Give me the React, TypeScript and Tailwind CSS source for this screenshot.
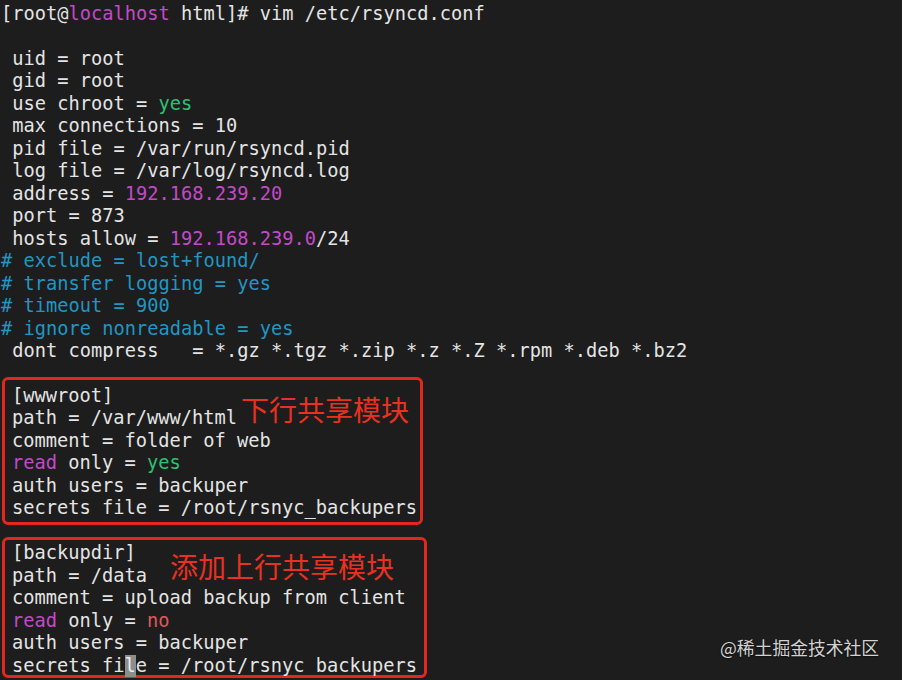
import React from "react";

type Seg = { t: string; c?: string; cursor?: boolean; note?: "a" | "b" };

const G = "text-[#2ec173]";
const M = "text-[#c449c9]";
const C = "text-[#2196c3]";
const R = "text-[#e0575b]";

const head: Seg[][] = [
  [{ t: "[root@" }, { t: "localhost", c: M }, { t: " html]# vim /etc/rsyncd.conf" }],
  [{ t: " " }],
  [{ t: " uid = root" }],
  [{ t: " gid = root" }],
  [{ t: " use chroot = " }, { t: "yes", c: G }],
  [{ t: " max connections = 10" }],
  [{ t: " pid file = /var/run/rsyncd.pid" }],
  [{ t: " log file = /var/log/rsyncd.log" }],
  [{ t: " address = " }, { t: "192.168.239.20", c: M }],
  [{ t: " port = 873" }],
  [{ t: " hosts allow = " }, { t: "192.168.239.0", c: M }, { t: "/24" }],
  [{ t: "# exclude = lost+found/", c: C }],
  [{ t: "# transfer logging = yes", c: C }],
  [{ t: "# timeout = 900", c: C }],
  [{ t: "# ignore nonreadable = yes", c: C }],
  [{ t: " dont compress   = *.gz *.tgz *.zip *.z *.Z *.rpm *.deb *.bz2" }],
  [{ t: " " }],
];

const box1: Seg[][] = [
  [{ t: "[wwwroot]" }],
  [{ t: "path = /var/www/html" }, { t: "下行共享模块", note: "a" }],
  [{ t: "comment = folder of web" }],
  [{ t: "read", c: M }, { t: " only = " }, { t: "yes", c: G }],
  [{ t: "auth users = backuper" }],
  [{ t: "secrets file = /root/rsnyc_backupers" }],
];

const box2: Seg[][] = [
  [{ t: "[backupdir]" }],
  [{ t: "path = /data" }, { t: "添加上行共享模块", note: "b" }],
  [{ t: "comment = upload backup from client" }],
  [{ t: "read", c: M }, { t: " only = " }, { t: "no", c: R }],
  [{ t: "auth users = backuper" }],
  [{ t: "secrets fi" }, { t: "l", cursor: true }, { t: "e = /root/rsnyc backupers" }],
];

const cjk = { fontFamily: '"Noto Sans CJK SC", sans-serif' };

function Line({ segs }: { segs: Seg[] }) {
  return (
    <div className="flex items-start h-[22.47px]">
      {segs.map((s, j) => {
        if (s.cursor)
          return (
            <span key={j} className="bg-[#8d8d8d] text-[#ececec]">
              {s.t}
            </span>
          );
        if (s.note === "a")
          return (
            <span key={j} className="ml-[4px] -mt-[12.5px] text-[28px] leading-none text-[#e8321f]" style={cjk}>
              {s.t}
            </span>
          );
        if (s.note === "b")
          return (
            <span key={j} className="ml-[23px] -mt-[12.5px] text-[28px] leading-none text-[#e8321f]" style={cjk}>
              {s.t}
            </span>
          );
        return (
          <span key={j} className={s.c ?? ""}>
            {s.t}
          </span>
        );
      })}
    </div>
  );
}

export default function App() {
  return (
    <div className="relative w-[902px] h-[680px] overflow-hidden bg-[#1d1d1d]">
      <div
        className="flex flex-col pt-[3px] pl-[1px] whitespace-pre text-[18.7px] leading-[22.47px] text-[#e4e4e4]"
        style={{ fontFamily: '"DejaVu Sans Mono", "Liberation Mono", monospace' }}
      >
        {head.map((ln, i) => (
          <Line key={i} segs={ln} />
        ))}
        <div className="relative z-10 ml-[1px] w-[421px] -mt-[8px] -mb-[5.2px] pt-[5px] pb-[2.2px] pl-[7px] border-[3px] border-[#e3271d] rounded-[6px]">
          {box1.map((ln, i) => (
            <Line key={i} segs={ln} />
          ))}
        </div>
        <Line segs={[{ t: " " }]} />
        <div className="relative z-10 ml-[1px] w-[425px] h-[141px] -mt-[5.3px] pt-[2.3px] pl-[7px] border-[3px] border-[#e3271d] rounded-[6px]">
          {box2.map((ln, i) => (
            <Line key={i} segs={ln} />
          ))}
        </div>
      </div>

      <div
        className="absolute left-[720px] top-[639px] text-[17.8px] leading-none text-[#d2d2d2] [text-shadow:0_1px_2px_rgba(0,0,0,0.6)]"
        style={cjk}
      >
        @稀土掘金技术社区
      </div>
    </div>
  );
}
